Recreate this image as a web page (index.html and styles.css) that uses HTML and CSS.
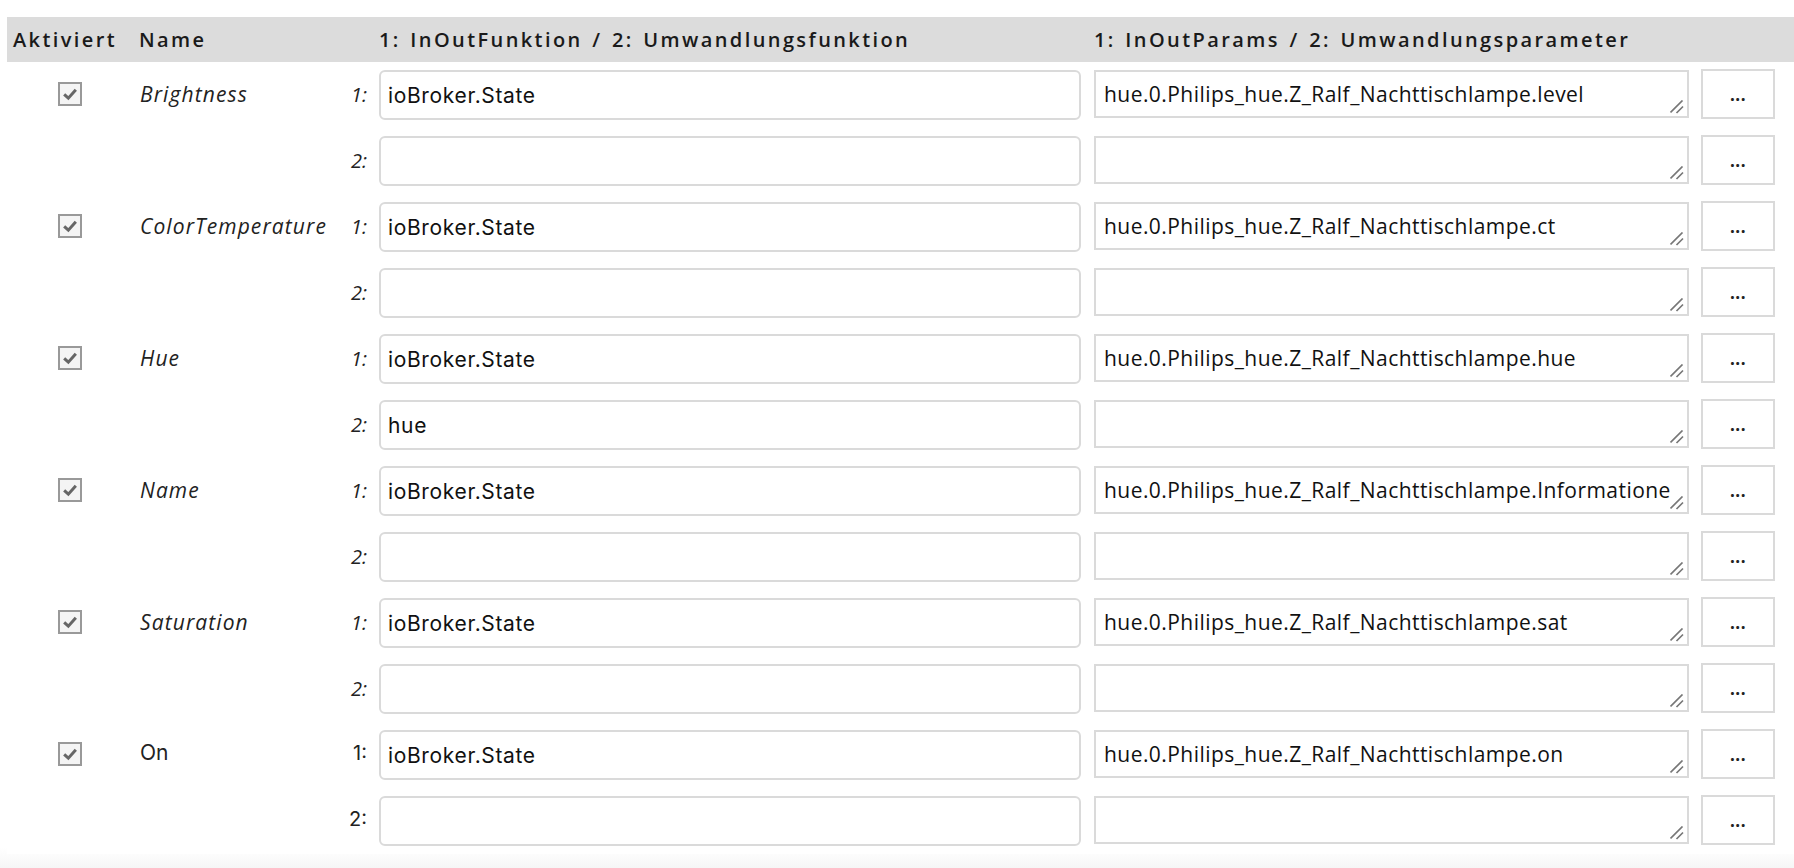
FILE: index.html
```html
<!DOCTYPE html>
<html lang="de">
<head>
    <meta charset="UTF-8">
    <title>Zustände</title>
    <link rel="stylesheet" href="styles.css">
</head>
<body>
    <div class="page">
        <div class="states">
            <div class="head">
                <div class="h-active">Aktiviert</div>
                <div class="h-name">Name</div>
                <div class="h-func">1: InOutFunktion / 2: Umwandlungsfunktion</div>
                <div class="h-params">1: InOutParams / 2: Umwandlungsparameter</div>
            </div>

            <!-- Brightness -->
            <div class="line">
                <div class="c-check"><span class="check"><svg viewBox="0 0 12 12"><path d="M2.5 6.2 L5 8.5 L9.5 3.5"/></svg></span></div>
                <div class="c-name">Brightness</div>
                <div class="c-num">1:</div>
                <div class="c-func"><input type="text" value="ioBroker.State"></div>
                <div class="c-param"><div class="param-box"><textarea>hue.0.Philips_hue.Z_Ralf_Nachttischlampe.level</textarea><svg class="grip" viewBox="0 0 14 14"><path d="M0.5 12.5 L12.5 0.5 M6.5 13 L13 6.5"/></svg></div></div>
                <div class="c-btn"><button type="button">...</button></div>
            </div>
            <div class="line">
                <div class="c-check"></div>
                <div class="c-name"></div>
                <div class="c-num">2:</div>
                <div class="c-func"><input type="text" value=""></div>
                <div class="c-param"><div class="param-box"><textarea></textarea><svg class="grip" viewBox="0 0 14 14"><path d="M0.5 12.5 L12.5 0.5 M6.5 13 L13 6.5"/></svg></div></div>
                <div class="c-btn"><button type="button">...</button></div>
            </div>

            <!-- ColorTemperature -->
            <div class="line">
                <div class="c-check"><span class="check"><svg viewBox="0 0 12 12"><path d="M2.5 6.2 L5 8.5 L9.5 3.5"/></svg></span></div>
                <div class="c-name">ColorTemperature</div>
                <div class="c-num">1:</div>
                <div class="c-func"><input type="text" value="ioBroker.State"></div>
                <div class="c-param"><div class="param-box"><textarea>hue.0.Philips_hue.Z_Ralf_Nachttischlampe.ct</textarea><svg class="grip" viewBox="0 0 14 14"><path d="M0.5 12.5 L12.5 0.5 M6.5 13 L13 6.5"/></svg></div></div>
                <div class="c-btn"><button type="button">...</button></div>
            </div>
            <div class="line">
                <div class="c-check"></div>
                <div class="c-name"></div>
                <div class="c-num">2:</div>
                <div class="c-func"><input type="text" value=""></div>
                <div class="c-param"><div class="param-box"><textarea></textarea><svg class="grip" viewBox="0 0 14 14"><path d="M0.5 12.5 L12.5 0.5 M6.5 13 L13 6.5"/></svg></div></div>
                <div class="c-btn"><button type="button">...</button></div>
            </div>

            <!-- Hue -->
            <div class="line">
                <div class="c-check"><span class="check"><svg viewBox="0 0 12 12"><path d="M2.5 6.2 L5 8.5 L9.5 3.5"/></svg></span></div>
                <div class="c-name">Hue</div>
                <div class="c-num">1:</div>
                <div class="c-func"><input type="text" value="ioBroker.State"></div>
                <div class="c-param"><div class="param-box"><textarea>hue.0.Philips_hue.Z_Ralf_Nachttischlampe.hue</textarea><svg class="grip" viewBox="0 0 14 14"><path d="M0.5 12.5 L12.5 0.5 M6.5 13 L13 6.5"/></svg></div></div>
                <div class="c-btn"><button type="button">...</button></div>
            </div>
            <div class="line">
                <div class="c-check"></div>
                <div class="c-name"></div>
                <div class="c-num">2:</div>
                <div class="c-func"><input type="text" value="hue"></div>
                <div class="c-param"><div class="param-box"><textarea></textarea><svg class="grip" viewBox="0 0 14 14"><path d="M0.5 12.5 L12.5 0.5 M6.5 13 L13 6.5"/></svg></div></div>
                <div class="c-btn"><button type="button">...</button></div>
            </div>

            <!-- Name -->
            <div class="line">
                <div class="c-check"><span class="check"><svg viewBox="0 0 12 12"><path d="M2.5 6.2 L5 8.5 L9.5 3.5"/></svg></span></div>
                <div class="c-name">Name</div>
                <div class="c-num">1:</div>
                <div class="c-func"><input type="text" value="ioBroker.State"></div>
                <div class="c-param"><div class="param-box"><textarea>hue.0.Philips_hue.Z_Ralf_Nachttischlampe.Informationen.name</textarea><svg class="grip" viewBox="0 0 14 14"><path d="M0.5 12.5 L12.5 0.5 M6.5 13 L13 6.5"/></svg></div></div>
                <div class="c-btn"><button type="button">...</button></div>
            </div>
            <div class="line">
                <div class="c-check"></div>
                <div class="c-name"></div>
                <div class="c-num">2:</div>
                <div class="c-func"><input type="text" value=""></div>
                <div class="c-param"><div class="param-box"><textarea></textarea><svg class="grip" viewBox="0 0 14 14"><path d="M0.5 12.5 L12.5 0.5 M6.5 13 L13 6.5"/></svg></div></div>
                <div class="c-btn"><button type="button">...</button></div>
            </div>

            <!-- Saturation -->
            <div class="line">
                <div class="c-check"><span class="check"><svg viewBox="0 0 12 12"><path d="M2.5 6.2 L5 8.5 L9.5 3.5"/></svg></span></div>
                <div class="c-name">Saturation</div>
                <div class="c-num">1:</div>
                <div class="c-func"><input type="text" value="ioBroker.State"></div>
                <div class="c-param"><div class="param-box"><textarea>hue.0.Philips_hue.Z_Ralf_Nachttischlampe.sat</textarea><svg class="grip" viewBox="0 0 14 14"><path d="M0.5 12.5 L12.5 0.5 M6.5 13 L13 6.5"/></svg></div></div>
                <div class="c-btn"><button type="button">...</button></div>
            </div>
            <div class="line">
                <div class="c-check"></div>
                <div class="c-name"></div>
                <div class="c-num">2:</div>
                <div class="c-func"><input type="text" value=""></div>
                <div class="c-param"><div class="param-box"><textarea></textarea><svg class="grip" viewBox="0 0 14 14"><path d="M0.5 12.5 L12.5 0.5 M6.5 13 L13 6.5"/></svg></div></div>
                <div class="c-btn"><button type="button">...</button></div>
            </div>

            <!-- On -->
            <div class="line plain">
                <div class="c-check"><span class="check"><svg viewBox="0 0 12 12"><path d="M2.5 6.2 L5 8.5 L9.5 3.5"/></svg></span></div>
                <div class="c-name">On</div>
                <div class="c-num">1:</div>
                <div class="c-func"><input type="text" value="ioBroker.State"></div>
                <div class="c-param"><div class="param-box"><textarea>hue.0.Philips_hue.Z_Ralf_Nachttischlampe.on</textarea><svg class="grip" viewBox="0 0 14 14"><path d="M0.5 12.5 L12.5 0.5 M6.5 13 L13 6.5"/></svg></div></div>
                <div class="c-btn"><button type="button">...</button></div>
            </div>
            <div class="line plain">
                <div class="c-check"></div>
                <div class="c-name"></div>
                <div class="c-num">2:</div>
                <div class="c-func"><input type="text" value=""></div>
                <div class="c-param"><div class="param-box"><textarea></textarea><svg class="grip" viewBox="0 0 14 14"><path d="M0.5 12.5 L12.5 0.5 M6.5 13 L13 6.5"/></svg></div></div>
                <div class="c-btn"><button type="button">...</button></div>
            </div>
        </div>
    </div>
</body>
</html>
```

FILE: styles.css
```css
body {
    margin: 0;
    padding: 0;
    font-family: "Open Sans", sans-serif;
    color: #222;
    background: linear-gradient(#fff 0, #fff 848px, #f6f6f6 868px);
    min-height: 868px;
}
.page {
    padding: 17px 0 0 7px;
}
.states {
    background: #fff;
}
.head,
.line {
    display: grid;
    grid-template-columns: 126px 207px 39px 715px 607px 74px;
}
.head {
    height: 45px;
    align-items: center;
    background: #dcdcdc;
    font-weight: 600;
    font-size: 20px;
    letter-spacing: 2.4px;
    word-spacing: 2px;
    color: #1a1a1a;
}
.h-active {
    padding-left: 6px;
}
.h-name {
    grid-column: span 2;
    padding-left: 6px;
}
.h-params {
    grid-column: span 2;
}
.line {
    height: 66px;
    align-items: start;
}
.c-check {
    display: flex;
    justify-content: center;
    padding-top: 20px;
}
.check {
    display: block;
    width: 20px;
    height: 20px;
    border: 2px solid #999;
    background: #f4f4f4;
}
.check svg {
    display: block;
    width: 20px;
    height: 20px;
}
.check path {
    fill: none;
    stroke: #666;
    stroke-width: 1.8;
}
.c-name {
    padding: 18px 0 0 7px;
    font-size: 21px;
    letter-spacing: 1.1px;
    font-style: italic;
}
.c-num {
    padding: 19px 12px 0 0;
    text-align: right;
    font-size: 20px;
    font-style: italic;
}
.c-func,
.c-param {
    padding-top: 8px;
}
input[type="text"] {
    box-sizing: border-box;
    width: 702px;
    height: 50px;
    padding: 0 7px;
    border: 2px solid #dadada;
    border-radius: 6px;
    font-family: Inter, sans-serif;
    font-size: 21px;
    letter-spacing: 0.65px;
    color: #111;
    outline: none;
}
.param-box {
    position: relative;
    width: 595px;
}
textarea {
    display: block;
    box-sizing: border-box;
    width: 595px;
    height: 48px;
    padding: 8px 12px 0 8px;
    border: 2px solid #dadada;
    border-radius: 0;
    font-family: "Open Sans", sans-serif;
    font-size: 21px;
    letter-spacing: 0.45px;
    line-height: 28px;
    color: #111;
    overflow: hidden;
    white-space: pre-wrap;
    overflow-wrap: break-word;
    resize: none;
    outline: none;
}
.grip {
    position: absolute;
    right: 5px;
    bottom: 4px;
    width: 14px;
    height: 14px;
}
.grip path {
    fill: none;
    stroke: #777;
    stroke-width: 1.7;
}
.c-btn {
    padding-top: 7px;
}
button {
    box-sizing: border-box;
    width: 74px;
    height: 50px;
    background: #fff;
    border: 2px solid #dadada;
    font-family: "Open Sans", sans-serif;
    font-size: 17px;
    font-weight: 700;
    letter-spacing: 0.5px;
    color: #222;
    cursor: pointer;
}
.plain .c-name,
.plain .c-num {
    font-style: normal;
    font-family: Inter, sans-serif;
    letter-spacing: 0;
}
```
